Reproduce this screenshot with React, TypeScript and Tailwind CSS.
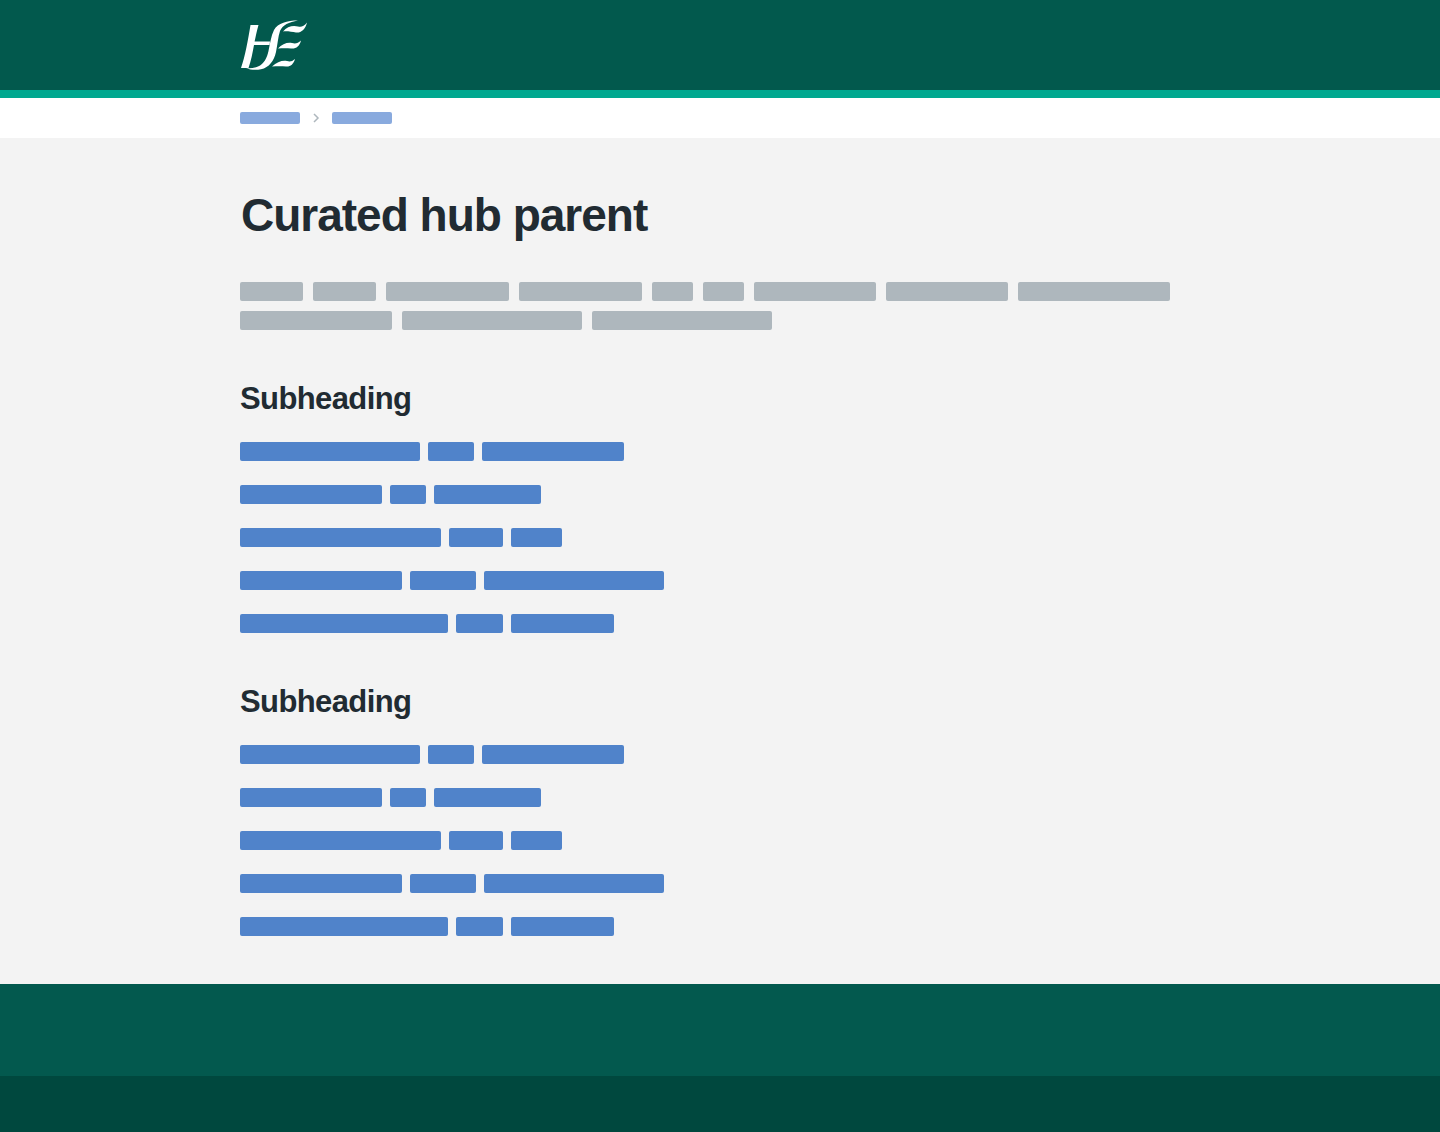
const introRows = [
  [63, 63, 123, 123, 41, 41, 122, 122, 152],
  [152, 180, 180],
]

const linkRows = [
  [180, 46, 142],
  [142, 36, 107],
  [201, 54, 51],
  [162, 66, 180],
  [208, 47, 103],
]

const HseLogo = () => (
  <svg width="66" height="50" viewBox="0 0 66 50" fill="#ffffff" aria-label="HSE">
    <path d="M9.5 5 L17.5 5 C15.5 12 14.4 18 13.6 21.5 L29 21.5 L28.6 25 L13 25 C11.5 33 10 41 7.5 48 L0 48 C4 37 7 20 9.5 5 Z" />
    <path d="M57 0.5 C46 0.5 37 3 33 10 C30 16 29 24 27.5 31 C26 38 23 44 17 46.5 C13 48 9 48.5 5 48 C9 50 15 50.3 20 49.3 C28 47.5 33 41 35 32 C36.5 25 37 17 39 11 C41.5 5 48 2 57 0.5 Z" />
    <path d="M42 11.5 C46 6.5 52 5 57 6.5 C60 7.5 63 6.5 66 2.5 C64.5 9.5 60 13 55 12.5 C51 12 46.5 11 42 11.5 Z" />
    <path d="M37 28.5 C41 23.5 47 22 51 23 C54 24 57 23.5 60 20.5 C58.5 26.5 55 29 50 28.5 C46 28 41.5 28 37 28.5 Z" />
    <path d="M31 46.5 C36 41.5 42 40 46 41 C49 42 51 41.5 54 39 C52.5 44.5 49 47 45 46.5 C41 46 35.5 46 31 46.5 Z" />
  </svg>
)

const LinkList = () => (
  <div className="mt-[23px] flex flex-col gap-6">
    {linkRows.map((row, i) => (
      <div key={i} className="flex gap-2">
        {row.map((w, j) => (
          <span key={j} className="h-[19px] rounded-[2px] bg-[#5083ca]" style={{ width: w }} />
        ))}
      </div>
    ))}
  </div>
)

export default function App() {
  return (
    <div className="min-h-[1132px] bg-[#f3f3f3] font-['Liberation_Sans',Arial,sans-serif] text-[#212b32]">
      <header className="h-[98px] border-b-8 border-[#00a88f] bg-[#02594d]">
        <div className="mx-auto w-[960px] pt-5 pl-px">
          <HseLogo />
        </div>
      </header>

      <nav className="h-10 bg-white">
        <div className="mx-auto flex w-[960px] items-center gap-3 pt-[14px]">
          <span className="h-3 w-[60px] rounded-[2px] bg-[#89aade]" />
          <svg width="8" height="10" viewBox="0 0 8 10" fill="none" stroke="#aeb7bd" strokeWidth="1.5">
            <path d="M2 1 L6 5 L2 9" />
          </svg>
          <span className="h-3 w-[60px] rounded-[2px] bg-[#89aade]" />
        </div>
      </nav>

      <main className="mx-auto h-[846px] w-[960px] pt-[49px]">
        <h1 className="pl-px text-[46px] leading-[56px] font-bold tracking-[-1px]">Curated hub parent</h1>

        <div className="mt-[39px] flex flex-col gap-[10px]">
          {introRows.map((row, i) => (
            <div key={i} className="flex gap-[10px]">
              {row.map((w, j) => (
                <span key={j} className="h-[19px] rounded-[2px] bg-[#aeb7bd]" style={{ width: w }} />
              ))}
            </div>
          ))}
        </div>

        <h2 className="mt-[49px] text-[31px] leading-[40px] font-bold tracking-[-0.6px]">Subheading</h2>
        <LinkList />

        <h2 className="mt-[49px] text-[31px] leading-[40px] font-bold tracking-[-0.6px]">Subheading</h2>
        <LinkList />
      </main>

      <footer>
        <div className="h-[92px] bg-[#03594e]" />
        <div className="h-14 bg-[#00483e]" />
      </footer>
    </div>
  )
}
